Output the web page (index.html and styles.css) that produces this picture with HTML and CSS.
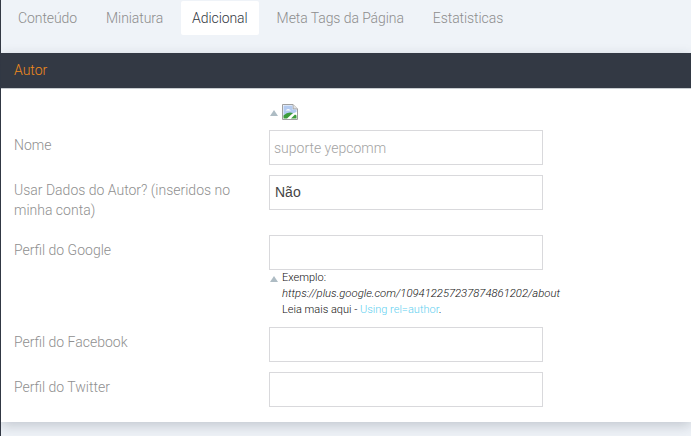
FILE: index.html
```html
<!DOCTYPE html>
<html lang="pt">
<head>
<meta charset="utf-8">
<title>Adicional</title>
<link rel="stylesheet" href="styles.css">
</head>
<body>
<div class="page">
  <nav class="tabs">
    <a class="tab">Conteúdo</a>
    <a class="tab">Miniatura</a>
    <a class="tab active">Adicional</a>
    <a class="tab">Meta Tags da Página</a>
    <a class="tab">Estatisticas</a>
  </nav>
  <section class="panel">
    <h2 class="panel-title">Autor</h2>
    <div class="panel-body">
      <div class="hint-row">
        <span class="tri"></span>
        <svg class="broken" width="16" height="16" viewBox="0 0 16 16">
          <path d="M0.5 0.5H11L15.5 5V15.5H0.5Z" fill="#fff" stroke="#a0a0a0"/>
          <path d="M11 0.5V5H15.5" fill="#e4e4e4" stroke="#a0a0a0"/>
          <path d="M1.5 1.5H10.5V5.5H14.5V8L1.5 13Z" fill="#b4cbf0"/>
          <path d="M3.5 6.5Q6 3.5 9 6.5Z" fill="#fff"/>
          <path d="M1.5 14.5V11.5Q6 7 11 9L5 14.5Z" fill="#3c9c3c"/>
          <path d="M9 14.5L13 10.5L14.5 11.5V14.5Z" fill="#3c9c3c"/>
        </svg>
      </div>
      <div class="row">
        <label class="label">Nome</label>
        <div class="field"><input class="input" placeholder="suporte yepcomm"></div>
      </div>
      <div class="row">
        <label class="label">Usar Dados do Autor? (inseridos no minha conta)</label>
        <div class="field"><div class="input select">Não</div></div>
      </div>
      <div class="row tight">
        <label class="label">Perfil do Google</label>
        <div class="field">
          <input class="input">
          <div class="help">
            <span class="tri help-tri"></span>
            <div class="help-text">
              <div>Exemplo:</div>
              <div><em class="url">https://plus.google.com/109412257237874861202/about</em></div>
              <div>Leia mais aqui - <a class="link">Using rel=author</a>.</div>
            </div>
          </div>
        </div>
      </div>
      <div class="row">
        <label class="label">Perfil do Facebook</label>
        <div class="field"><input class="input"></div>
      </div>
      <div class="row">
        <label class="label">Perfil do Twitter</label>
        <div class="field"><input class="input"></div>
      </div>
    </div>
  </section>
</div>
</body>
</html>
```
FILE: styles.css
```css
* { box-sizing: border-box; }
html, body { margin: 0; height: 100%; overflow: hidden; }
body {
  background: #eff3f8;
  font-family: Roboto, "Liberation Sans", sans-serif;
  font-weight: 300;
  font-size: 14px;
}
.page {
  height: 436px;
  border-left: 1px solid #333944;
  display: flex;
  flex-direction: column;
}
.tabs {
  display: flex;
  gap: 7px;
  padding: 1px 0 0 6px;
  height: 53px;
  flex: none;
}
.tab {
  height: 34px;
  padding: 0 11px;
  line-height: 34px;
  color: #8d8d8d;
  font-size: 14px;
  letter-spacing: -0.08px;
}
.tab.active {
  background: #fff;
  color: #33383f;
  border-radius: 2px;
}
.panel {
  background: #fff;
  height: 369px;
  flex: none;
  box-shadow: 0 4px 12px rgba(40, 50, 70, 0.22);
}
.panel-title {
  margin: 0;
  height: 36px;
  padding-left: 13px;
  background: #333944;
  border-bottom: 1px solid #c8ccd0;
  color: #f08a1c;
  font-size: 14px;
  font-weight: 300;
  line-height: 35px;
}
.panel-body {
  padding: 15px 0 0 13px;
}
.hint-row {
  margin-left: 256px;
  height: 26px;
  display: flex;
  align-items: flex-start;
  gap: 4px;
}
.tri {
  display: inline-block;
  width: 0;
  height: 0;
  margin-top: 6px;
  border-left: 4px solid transparent;
  border-right: 4px solid transparent;
  border-bottom: 6px solid #aebcc4;
}
.broken { display: block; }
.row {
  display: flex;
  margin-bottom: 10px;
}
.row.tight { margin-bottom: 9px; }
.label {
  width: 255px;
  padding: 5px 14px 5px 0;
  color: #8f8f8f;
  font-size: 14px;
  line-height: 20px;
  flex: none;
}
.field { width: 274px; flex: none; }
.input {
  display: block;
  width: 274px;
  height: 35px;
  border: 1px solid #d9d9dc;
  background: #fff;
  padding: 0 4px;
  font: 300 14px Roboto, "Liberation Sans", sans-serif;
  outline: none;
  border-radius: 0;
}
.input::placeholder { color: #a3a3a3; opacity: 1; }
.select {
  padding-left: 5px;
  color: #444;
  font: 400 14px/33px "Liberation Sans", Arial, sans-serif;
}
.help {
  display: flex;
  gap: 4px;
  padding-left: 1px;
  width: 320px;
}
.help-tri { margin-top: 6px; flex: none; }
.help-text {
  font-size: 11px;
  line-height: 16px;
  color: #111;
  font-weight: 300;
  white-space: nowrap;
}
.url { font-size: 11.3px; }
.link { color: #5fd0f0; }
```
